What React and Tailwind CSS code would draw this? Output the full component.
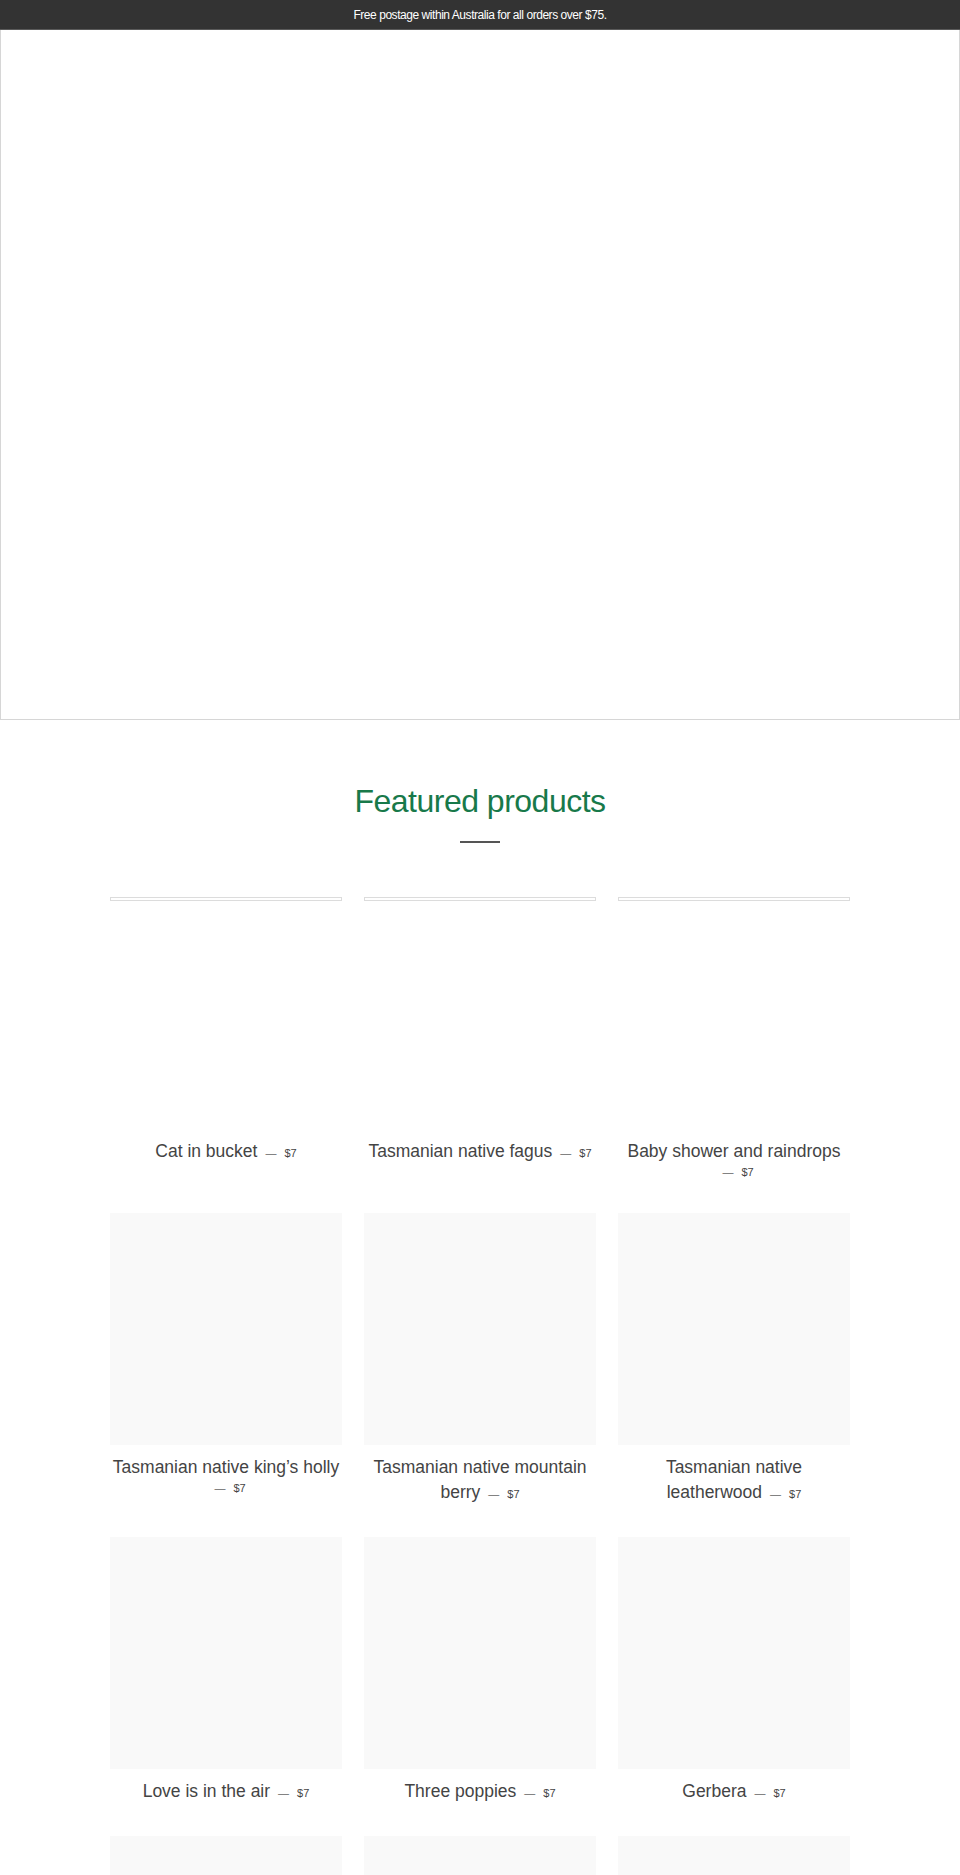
import React from "react";

const products = [
  { name: "Cat in bucket", price: "$7", loaded: false },
  { name: "Tasmanian native fagus", price: "$7", loaded: false },
  { name: "Baby shower and raindrops", price: "$7", loaded: false },
  { name: "Tasmanian native king’s holly", price: "$7", loaded: true },
  { name: "Tasmanian native mountain berry", price: "$7", loaded: true },
  { name: "Tasmanian native leatherwood", price: "$7", loaded: true },
  { name: "Love is in the air", price: "$7", loaded: true },
  { name: "Three poppies", price: "$7", loaded: true },
  { name: "Gerbera", price: "$7", loaded: true },
  { name: "Waratah", price: "$7", loaded: true },
  { name: "Banksia", price: "$7", loaded: true },
  { name: "Wattle", price: "$7", loaded: true },
];

const ProductCard = ({ product }) => (
  <div className="pb-[32px]">
    {product.loaded ? (
      <div className="aspect-square w-full bg-[#f9f9f9]" />
    ) : (
      <div className="aspect-square w-full">
        <div className="h-[4px] w-full border border-[#dcdcdc] bg-white" />
      </div>
    )}
    <div className="mt-[10px] text-center text-[11px] leading-[17px] text-[#444444]">
      <span className="text-[17.5px] leading-[25px]">{product.name}</span>
      <span className="mx-[8px] text-[11px] text-[#666666]">—</span>
      <span className="text-[11px]">{product.price}</span>
    </div>
  </div>
);

export default function App() {
  return (
    <div className="min-h-screen bg-white font-['Liberation_Sans',Arial,sans-serif]">
      <div className="flex h-[30px] items-center justify-center border-b border-[#5a5a5a] bg-[#333333] text-[12px] tracking-[-0.45px] text-white">
        Free postage within Australia for all orders over $75.
      </div>

      <div className="h-[690px] w-full border-x border-b border-[#d6d6d6] bg-white" />

      <section className="pt-[62px]">
        <h2 className="text-center text-[32px] leading-[38px] tracking-[-0.5px] text-[#18794a]">
          Featured products
        </h2>
        <div className="mx-auto mt-[21px] h-[2px] w-[40px] bg-[#555555]" />

        <div className="mx-auto mt-[54px] grid w-[740px] grid-cols-3 gap-x-[22px]">
          {products.map((p) => (
            <ProductCard key={p.name} product={p} />
          ))}
        </div>
      </section>
    </div>
  );
}
